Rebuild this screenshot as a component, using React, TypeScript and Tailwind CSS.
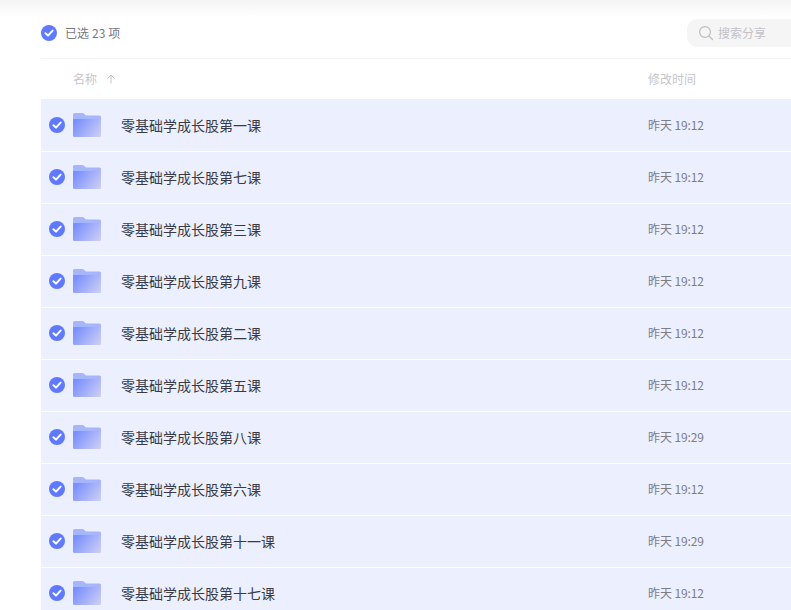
const rows = [
  { name: "零基础学成长股第一课", time: "昨天 19:12" },
  { name: "零基础学成长股第七课", time: "昨天 19:12" },
  { name: "零基础学成长股第三课", time: "昨天 19:12" },
  { name: "零基础学成长股第九课", time: "昨天 19:12" },
  { name: "零基础学成长股第二课", time: "昨天 19:12" },
  { name: "零基础学成长股第五课", time: "昨天 19:12" },
  { name: "零基础学成长股第八课", time: "昨天 19:29" },
  { name: "零基础学成长股第六课", time: "昨天 19:12" },
  { name: "零基础学成长股第十一课", time: "昨天 19:29" },
  { name: "零基础学成长股第十七课", time: "昨天 19:12" },
];

function Check() {
  return (
    <svg width="16" height="16" viewBox="0 0 16 16" className="shrink-0">
      <circle cx="8" cy="8" r="8" fill="#5f79ff" />
      <path d="M4.4 8.2 L7 10.6 L11.6 5.6" fill="none" stroke="#fff" strokeWidth="2" strokeLinecap="round" strokeLinejoin="round" />
    </svg>
  );
}

function Folder({ id }: { id: string }) {
  return (
    <svg width="28" height="24" viewBox="0 0 28 24" className="shrink-0">
      <defs>
        <linearGradient id={id} x1="0" y1="0.3" x2="1" y2="0.8">
          <stop offset="0" stopColor="#7a90fe" />
          <stop offset="1" stopColor="#c9ccf3" />
        </linearGradient>
      </defs>
      <path d="M1.5 0 H9 Q10.5 0 11.5 1.2 L13 2.5 H26.5 Q28 2.5 28 4 V8 H0 V1.5 Q0 0 1.5 0 Z" fill="#a6b6fd" />
      <path d="M0 6 H28 V22.5 Q28 24 26.5 24 H1.5 Q0 24 0 22.5 Z" fill={`url(#${id})`} />
    </svg>
  );
}

export default function App() {
  return (
    <div className="w-full h-[610px] overflow-hidden bg-white font-['Noto_Sans_CJK_SC','Liberation_Sans',sans-serif]">
      <div className="h-[18px] bg-gradient-to-b from-[#f4f4f4] to-white" />
      <div className="pl-[41px]">
        {/* Selection bar */}
        <div className="h-[41px] flex items-center justify-between border-b border-[#f4f4f6]">
          <div className="flex items-center gap-2 -mt-[11px]">
            <Check />
            <span className="text-xs tracking-[0.1px] text-[#77777f]">已选 23 项</span>
          </div>
          <div className="w-[104px] h-7 -mt-[11px] rounded-l-[10px] bg-[#f5f5f6] flex items-center gap-1 pl-[11px]">
            <svg width="16" height="16" viewBox="0 0 16 16" fill="none" stroke="#bdbdc2" strokeWidth="1.2" strokeLinecap="round">
              <circle cx="7" cy="7" r="5.4" />
              <path d="M11 11 L14.5 14.5" />
            </svg>
            <span className="text-xs text-[#c2c2c8]">搜索分享</span>
          </div>
        </div>

        {/* Column headers */}
        <div className="h-10 flex items-center text-xs text-[#c6c6cb]">
          <div className="w-[607px] flex items-center gap-2 pl-8 -mt-px">
            <span>名称</span>
            <svg width="12" height="12" viewBox="0 0 12 12" fill="none" stroke="#c4c4c8" strokeWidth="1">
              <path d="M6 2 V10.5 M2.5 5.5 L6 2 L9.5 5.5" />
            </svg>
          </div>
          <span className="-mt-px">修改时间</span>
        </div>

        {/* File rows */}
        <div className="pt-px bg-[#eceffe]">
          {rows.map((row, i) => (
            <div key={i} className="h-[52px] pb-px flex items-center border-b border-white bg-[#eceffe]">
              <div className="w-[607px] flex items-center pl-2">
                <Check />
                <div className="ml-2 -mt-px">
                  <Folder id={`folder-${i}`} />
                </div>
                <span className="ml-5 text-sm text-[#3a3a44]">{row.name}</span>
              </div>
              <span className="text-xs tracking-[-0.1px] text-[#7d7d87] -mt-px">{row.time}</span>
            </div>
          ))}
        </div>
      </div>
    </div>
  );
}
